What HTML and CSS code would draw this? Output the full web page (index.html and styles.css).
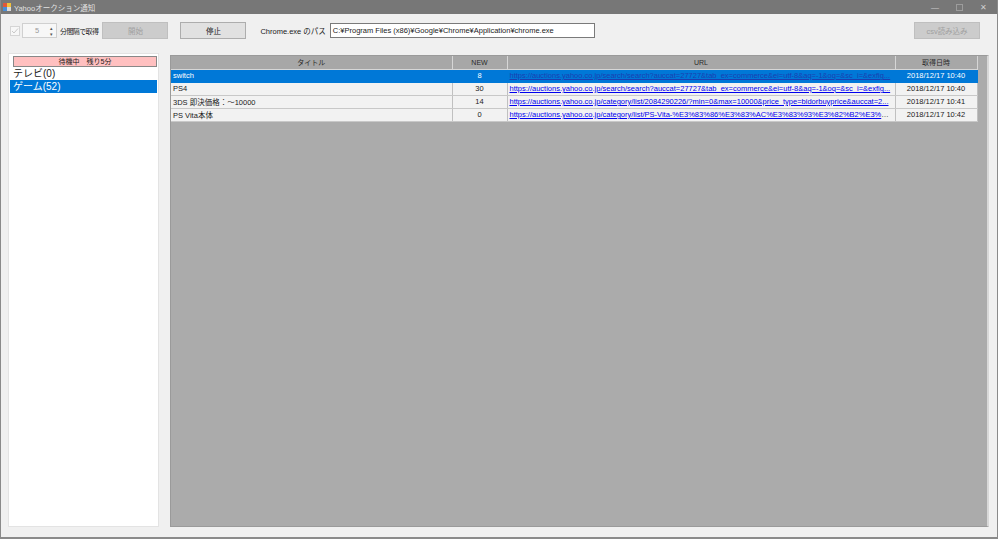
FILE: index.html
```html
<!DOCTYPE html>
<html lang="ja">
<head>
<meta charset="utf-8">
<title>Yahooオークション通知</title>
<link rel="stylesheet" href="styles.css">
</head>
<body>
<div class="window">
  <div class="titlebar">
    <div class="app-icon"><span class="q1"></span><span class="q2"></span><span class="q3"></span><span class="q4"></span></div>
    <span class="title">Yahooオークション通知</span>
    <div class="controls">
      <span class="ctl">&#8212;</span>
      <span class="ctl box"></span>
      <span class="ctl">&#10005;</span>
    </div>
  </div>
  <div class="toolbar">
    <span class="check"><svg width="8" height="8" viewBox="0 0 8 8"><path d="M1 4 L3 6 L7 1.5" fill="none" stroke="#c8c8c8" stroke-width="1"/></svg></span>
    <div class="spin"><span class="spin-val">5</span><span class="spin-btns"><span>&#9652;</span><span>&#9662;</span></span></div>
    <span class="label interval">分間隔で取得</span>
    <button class="btn disabled start">開始</button>
    <button class="btn stop">停止</button>
    <span class="label path-label">Chrome.exe のパス</span>
    <div class="textbox">C:¥Program Files (x86)¥Google¥Chrome¥Application¥chrome.exe</div>
    <div class="spacer"></div>
    <button class="btn disabled csv">csv読み込み</button>
  </div>
  <div class="main">
    <div class="sidebar">
      <div class="status">待機中　残り5分</div>
      <div class="list-item">テレビ(0)</div>
      <div class="list-item selected">ゲーム(52)</div>
    </div>
    <div class="grid">
      <table>
        <colgroup>
          <col class="c-title"><col class="c-new"><col class="c-url"><col class="c-date">
        </colgroup>
        <thead>
          <tr><th>タイトル</th><th>NEW</th><th>URL</th><th>取得日時</th></tr>
        </thead>
        <tbody>
          <tr class="sel"><td>switch</td><td class="num">8</td><td class="url"><a>https://auctions.yahoo.co.jp/search/search?auccat=27727&amp;tab_ex=commerce&amp;ei=utf-8&amp;aq=-1&amp;oq=&amp;sc_i=&amp;exfig...</a></td><td class="num">2018/12/17 10:40</td></tr>
          <tr><td>PS4</td><td class="num">30</td><td class="url"><a>https://auctions.yahoo.co.jp/search/search?auccat=27727&amp;tab_ex=commerce&amp;ei=utf-8&amp;aq=-1&amp;oq=&amp;sc_i=&amp;exfig...</a></td><td class="num">2018/12/17 10:40</td></tr>
          <tr><td>3DS 即決価格：～10000</td><td class="num">14</td><td class="url"><a>https://auctions.yahoo.co.jp/category/list/2084290226/?min=0&amp;max=10000&amp;price_type=bidorbuyprice&amp;auccat=2...</a></td><td class="num">2018/12/17 10:41</td></tr>
          <tr><td>PS Vita本体</td><td class="num">0</td><td class="url"><a>https://auctions.yahoo.co.jp/category/list/PS-Vita-%E3%83%86%E3%83%AC%E3%83%93%E3%82%B2%E3%83%...</a></td><td class="num">2018/12/17 10:42</td></tr>
        </tbody>
      </table>
    </div>
  </div>
</div>
</body>
</html>
```
FILE: styles.css
```css
* { box-sizing: border-box; }
html, body { margin: 0; padding: 0; }
body {
  width: 998px;
  height: 539px;
  overflow: hidden;
  font-family: "Liberation Sans", "Noto Sans CJK JP", sans-serif;
  font-size: 7.5px;
  color: #1a1a1a;
  background: #f0f0f0;
}
.window {
  width: 998px;
  height: 539px;
  display: flex;
  flex-direction: column;
  background: #f0f0f0;
  border-left: 1px solid #8a8a8a;
  border-right: 1px solid #8a8a8a;
  border-bottom: 2px solid #8a8a8a;
}
.titlebar {
  height: 14px;
  flex: none;
  background: #777777;
  display: flex;
  align-items: center;
  color: #e0e0e0;
  font-size: 7.5px;
  padding-left: 2px;
}
.app-icon {
  width: 8px;
  height: 8px;
  display: grid;
  grid-template-columns: 1fr 1fr;
  margin-right: 3px;
}
.app-icon .q1 { background: #e0583a; }
.app-icon .q2 { background: #f2c23a; }
.app-icon .q3 { background: #4a8ed6; }
.app-icon .q4 { background: #d8d8d8; }
.controls {
  margin-left: auto;
  display: flex;
  align-items: center;
  gap: 17px;
  margin-right: 10px;
  color: #cfcfcf;
  font-size: 8px;
}
.ctl.box {
  width: 7px;
  height: 7px;
  border: 1px solid #9c9c9c;
}
.toolbar {
  height: 33px;
  flex: none;
  display: flex;
  align-items: center;
  padding-left: 9px;
  padding-right: 17px;
}
.check {
  width: 10px;
  height: 10px;
  border: 1px solid #d5d5d5;
  background: #f7f7f7;
  display: flex;
  align-items: center;
  justify-content: center;
}
.spin {
  margin-left: 2px;
  width: 35px;
  height: 15px;
  border: 1px solid #d0d0d0;
  background: #f7f7f7;
  display: flex;
  align-items: center;
  color: #9a9a9a;
}
.spin-val { flex: 1; text-align: center; padding-left: 4px; }
.spin-btns {
  width: 9px;
  display: flex;
  flex-direction: column;
  font-size: 5px;
  line-height: 6px;
  color: #555;
  text-align: center;
}
.label { margin-left: 3px; color: #1a1a1a; white-space: nowrap; }
.label.interval { font-size: 7px; letter-spacing: -0.6px; }
.btn {
  font-family: inherit;
  font-size: 7.5px;
  height: 17px;
  width: 66px;
  border: 1px solid #adadad;
  background: #e1e1e1;
  color: #1a1a1a;
  padding: 0;
  margin: 0;
}
.btn.disabled {
  background: #cccccc;
  border-color: #bfbfbf;
  color: #a0a0a0;
}
.btn.start { margin-left: 4px; }
.btn.stop { margin-left: 12px; }
.path-label { margin-left: 14px; }
.textbox {
  margin-left: 4px;
  width: 265px;
  height: 15px;
  border: 1px solid #7a7a7a;
  background: #fff;
  display: flex;
  align-items: center;
  padding-left: 2px;
  white-space: nowrap;
}
.spacer { flex: 1; }
.main {
  flex: 1;
  display: flex;
  align-items: stretch;
  padding: 6px 10px 10px 7px;
  gap: 11px;
}
.sidebar {
  width: 151px;
  flex: none;
  background: #fff;
  border: 1px solid #e3e3e3;
  padding: 2px 1px 0 1px;
}
.status {
  margin-left: 3px;
  height: 11px;
  background: #ffc0c0;
  border: 1px solid #888;
  text-align: center;
  line-height: 9px;
  font-size: 7px;
}
.list-item {
  height: 13px;
  line-height: 13px;
  padding-left: 3px;
  font-size: 10px;
  color: #1a1a1a;
}
.list-item:first-of-type { margin-top: 2px; }
.list-item.selected { background: #0078d7; color: #fff; }
.grid {
  flex: 1;
  margin-top: 2px;
  background: #ababab;
  border: 1px solid #9a9a9a;
  border-right: 2px solid #d8d8d8;
  padding-right: 9px;
}
table {
  border-collapse: collapse;
  table-layout: fixed;
  width: 806px;
}
col.c-title { width: 281px; }
col.c-new { width: 55px; }
col.c-url { width: 388px; }
col.c-date { width: 82px; }
th {
  height: 13px;
  font-weight: normal;
  background: #a7a7a7;
  color: #2a2a2a;
  border-right: 1px solid #d6d6d6;
  border-bottom: 1px solid #d6d6d6;
  padding: 0;
  font-size: 7px;
}
td {
  height: 13px;
  padding: 0 2px;
  background: #f2f2f2;
  border-right: 1px solid #c0c0c0;
  border-bottom: 1px solid #c8c8c8;
  white-space: nowrap;
  overflow: hidden;
  text-overflow: ellipsis;
  font-size: 7.5px;
  color: #1a1a1a;
}
td.num { text-align: center; }
td.url a { color: #0000ee; text-decoration: underline; }
tr.sel td { background: #0078d7; color: #fff; border-color: #0078d7; }
tr.sel td.url a { color: #1b3fb0; }
```
